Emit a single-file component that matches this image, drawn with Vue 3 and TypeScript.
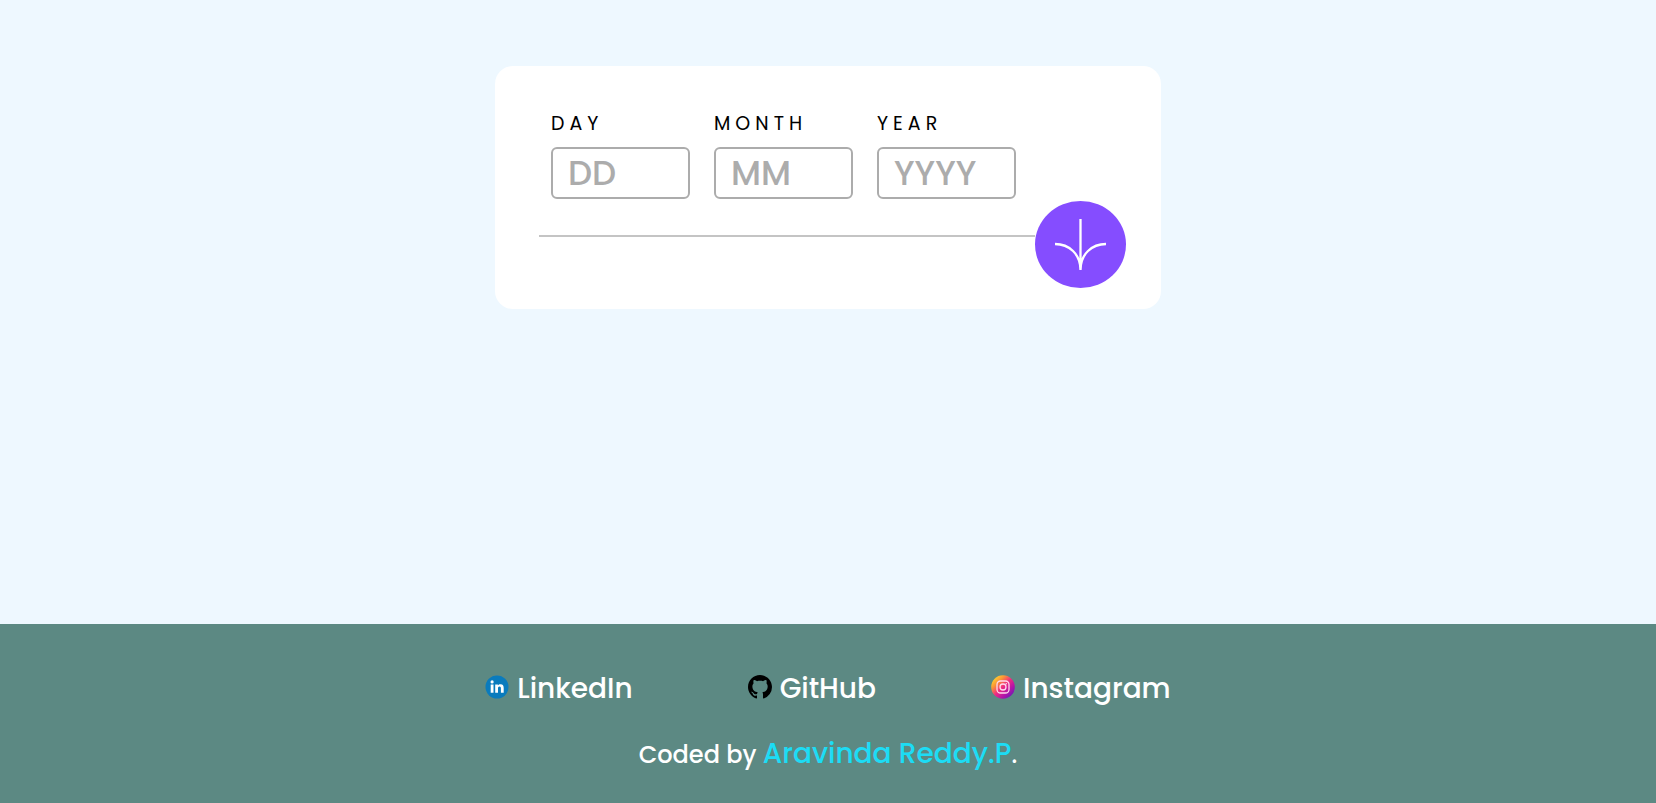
<script setup lang="ts">
import { ref } from 'vue'

interface DateField {
  id: string
  label: string
  placeholder: string
}

const fields: DateField[] = [
  { id: 'day', label: 'DAY', placeholder: 'DD' },
  { id: 'month', label: 'MONTH', placeholder: 'MM' },
  { id: 'year', label: 'YEAR', placeholder: 'YYYY' },
]

const values = ref<Record<string, string>>({ day: '', month: '', year: '' })
</script>

<template>
  <div class="page">
    <main class="main">
      <form class="card" @submit.prevent>
        <div class="fields">
          <div v-for="field in fields" :key="field.id" class="field">
            <label :for="field.id">{{ field.label }}</label>
            <input
              :id="field.id"
              v-model="values[field.id]"
              type="text"
              inputmode="numeric"
              :placeholder="field.placeholder"
            />
          </div>
        </div>
        <div class="divider">
          <hr />
          <button type="submit" aria-label="Calculate age">
            <svg viewBox="0 0 52 52" fill="none" stroke="#fff" stroke-width="2.3">
              <path d="M25.500 0v51M0 25C14 25 25.500 35 25.500 51C25.500 35 37 25 51 25" />
            </svg>
          </button>
        </div>
      </form>
    </main>

    <footer class="footer">
      <nav class="links">
        <a href="#linkedin">
          <svg viewBox="0 0 24 24" aria-hidden="true">
            <circle cx="12" cy="12" r="11.500" fill="#0a7bbd" />
            <circle cx="7.100" cy="6.900" r="1.600" fill="#fff" />
            <path
              fill="#fff"
              d="M5.700 9.400h2.800v8.300H5.700zM10.200 9.400h2.700v1.100c.5-.8 1.300-1.300 2.600-1.300 2.500 0 3.200 1.600 3.200 3.900v4.600h-2.800v-4.100c0-1.200-.1-2.200-1.400-2.200s-1.500 1-1.500 2.200v4.100h-2.800z"
            />
          </svg>
          <span>LinkedIn</span>
        </a>
        <a href="#github">
          <svg viewBox="0 0 16 16" aria-hidden="true">
            <path
              fill="#000"
              d="M8 0C3.580 0 0 3.580 0 8c0 3.540 2.290 6.530 5.470 7.590.4.070.550-.170.550-.380 0-.190-.010-.820-.010-1.490-2.010.370-2.530-.490-2.690-.940-.090-.230-.480-.940-.820-1.130-.280-.150-.680-.520-.010-.530.630-.010 1.080.580 1.230.820.720 1.210 1.870.870 2.330.660.070-.520.280-.870.510-1.070-1.780-.2-3.640-.890-3.640-3.950 0-.870.310-1.590.820-2.150-.080-.2-.360-1.020.080-2.120 0 0 .670-.210 2.200.820.640-.180 1.320-.270 2-.270s1.360.090 2 .270c1.530-1.040 2.200-.820 2.200-.820.440 1.100.160 1.920.080 2.120.510.560.820 1.270.820 2.150 0 3.070-1.870 3.750-3.650 3.950.290.250.540.730.540 1.480 0 1.070-.010 1.930-.010 2.200 0 .210.150.460.550.380A8.010 8.010 0 0 0 16 8c0-4.420-3.580-8-8-8z"
            />
          </svg>
          <span>GitHub</span>
        </a>
        <a href="#instagram">
          <svg viewBox="0 0 24 24" aria-hidden="true">
            <defs>
              <linearGradient id="insta" x1="0.100" y1="0.100" x2="0.900" y2="0.900">
                <stop offset="0" stop-color="#ffd92f" />
                <stop offset="0.250" stop-color="#fb9335" />
                <stop offset="0.500" stop-color="#ee2a84" />
                <stop offset="0.750" stop-color="#b414a8" />
                <stop offset="1" stop-color="#6a1bb5" />
              </linearGradient>
            </defs>
            <circle cx="12" cy="12" r="11.800" fill="url(#insta)" />
            <g fill="none" stroke="#ffd9ee" stroke-width="1.300">
              <rect x="6" y="6" width="12" height="12" rx="3.500" />
              <circle cx="12" cy="12" r="3" />
            </g>
            <circle cx="15.300" cy="8.700" r="0.800" fill="#ffd9ee" />
          </svg>
          <span>Instagram</span>
        </a>
      </nav>
      <p class="credit">Coded by <a href="#author">Aravinda Reddy.P</a>.</p>
    </footer>
  </div>
</template>

<style>
body {
  margin: 0;
}
</style>

<style scoped>
.page {
  display: flex;
  flex-direction: column;
  min-height: 100vh;
  background: #eef8ff;
  color: #000;
  font-family: Poppins, Inter, 'Open Sans', sans-serif;
  font-weight: 500;
}

.main {
  flex: 1;
  padding: 66px 24px;
}

.card {
  box-sizing: border-box;
  max-width: 666px;
  margin: 0 auto;
  padding: 42px 35px 21px 44px;
  border-radius: 18px;
  background: #fff;
}

.fields {
  display: flex;
  gap: 24px;
  padding-left: 12px;
}

.field {
  display: flex;
  flex-direction: column;
  gap: 7px;
}

label {
  font-size: 19px;
  font-weight: 400;
  line-height: 32px;
  letter-spacing: 5px;
}

input {
  box-sizing: border-box;
  width: 139px;
  height: 52px;
  padding: 0 15px;
  border: 2px solid #acacac;
  border-radius: 6px;
  background: #fff;
  color: #000;
  font: inherit;
  font-size: 34px;
  outline: none;
}

input::placeholder {
  color: #acacac;
  opacity: 1;
}

.divider {
  display: flex;
  align-items: flex-start;
  margin-top: 2px;
}

hr {
  flex: 1;
  height: 2px;
  margin: 34px 0 0;
  border: 0;
  background: #c4c4c4;
}

button {
  display: grid;
  place-items: center;
  width: 91px;
  height: 87px;
  padding: 0;
  border: 0;
  border-radius: 50%;
  background: #854dff;
  cursor: pointer;
}

button svg {
  width: 52px;
  height: 52px;
}

.footer {
  display: flex;
  flex-direction: column;
  align-items: center;
  gap: 22px;
  padding: 43px 24px 27px;
  background: #5c8983;
  color: #fff;
}

.links {
  display: flex;
  gap: 115px;
}

.links a {
  display: flex;
  align-items: center;
  gap: 8px;
  color: #fff;
  font-size: 28px;
  line-height: 44px;
  text-decoration: none;
}

.links svg {
  width: 24px;
  height: 24px;
  margin-bottom: 4px;
}

.credit {
  margin: 0;
  font-size: 24px;
  line-height: 42px;
}

.credit a {
  color: #1cdcf5;
  font-size: 28px;
  text-decoration: none;
}
</style>
